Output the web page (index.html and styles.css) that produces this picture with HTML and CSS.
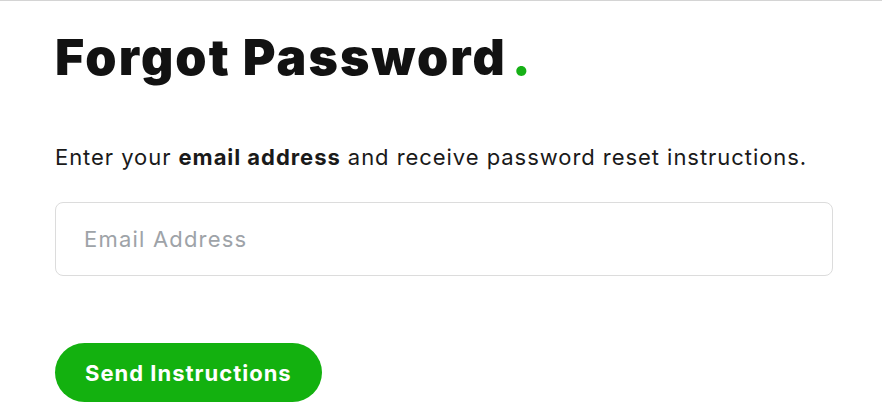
FILE: index.html
```html
<!DOCTYPE html>
<html lang="en">
<head>
<meta charset="utf-8">
<title>Forgot Password</title>
<link rel="stylesheet" href="styles.css">
</head>
<body>
<main class="page">
  <h1 class="title">Forgot Password<span class="dot">.</span></h1>
  <p class="lead">Enter your <strong>email address</strong> and receive password reset instructions.</p>
  <form class="form">
    <input class="field" type="email" placeholder="Email Address">
    <button class="btn" type="button">Send Instructions</button>
  </form>
</main>
</body>
</html>
```
FILE: styles.css
```css
* { box-sizing: border-box; }
html, body { margin: 0; padding: 0; background: #fff; }
body {
  font-family: Inter, "Noto Sans", sans-serif;
  color: #111;
  border-top: 1px solid #d4d4d4;
}
.page {
  padding: 26px 49px 0 55px;
}
.title {
  margin: 0;
  font-size: 50px;
  font-weight: 900;
  letter-spacing: 2.1px;
  line-height: 60px;
  color: #121212;
}
.dot { color: #16b016; margin-left: 5px; }
.lead {
  margin: 56px 0 0;
  font-size: 22px;
  letter-spacing: 0.95px;
  line-height: 28px;
  color: #1a1a1a;
}
.lead strong { font-weight: 700; }
.form { display: flex; flex-direction: column; align-items: flex-start; }
.field {
  margin-top: 31px;
  width: 778px;
  height: 74px;
  border: 1px solid #dcdcdc;
  border-radius: 8px;
  padding: 0 28px;
  font-family: inherit;
  font-size: 22px;
  letter-spacing: 1.2px;
  color: #111;
  outline: none;
}
.field::placeholder { color: #9ea3a8; }
.btn {
  margin-top: 67px;
  height: 59px;
  padding: 0 30px;
  border: 0;
  border-radius: 30px;
  background: #13b10f;
  color: #fff;
  font-family: inherit;
  font-size: 22px;
  letter-spacing: 1px;
  font-weight: 700;
}
```
